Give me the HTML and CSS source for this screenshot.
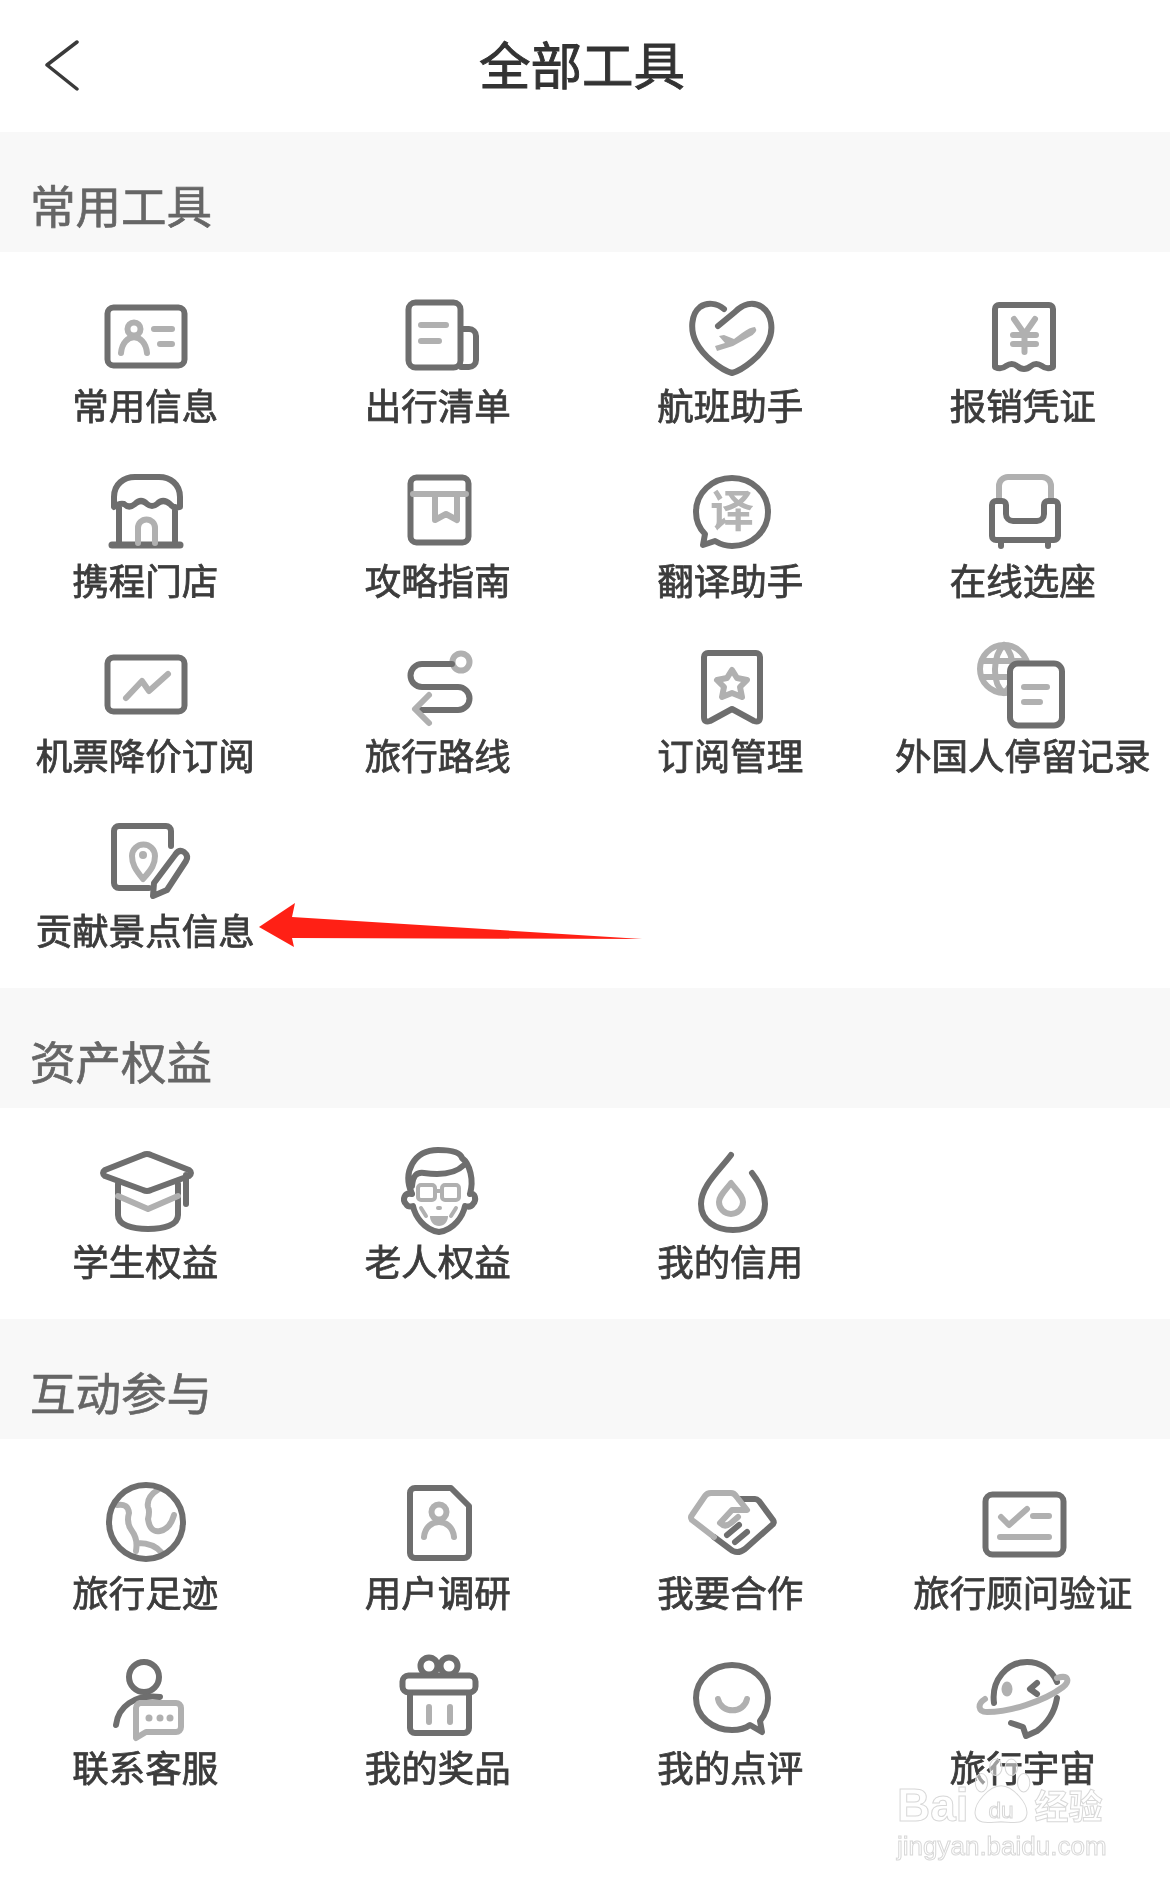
FILE: index.html
```html
<!DOCTYPE html>
<html lang="zh-CN">
<head>
<meta charset="utf-8">
<title>全部工具</title>
<link rel="stylesheet" href="styles.css">
</head>
<body>
<div class="page">
  <header class="top">
    <svg class="back" viewBox="0 0 36 54"><path d="M32 3 L2 26 L32 50"/></svg>
    <h1>全部工具</h1>
  </header>

  <h2 class="band">常用工具</h2>
  <section class="grid">
    <div class="item"><svg class="ic" viewBox="0 0 88 88"><rect class="d" x="5.500" y="17.500" width="77" height="58" rx="6"/><circle class="l" cx="32" cy="39" r="6.500"/><path class="l" d="M19 63C21 42 43 42 45 63M52 39H70M58 54H70"/></svg><span>常用信息</span></div>
    <div class="item"><svg class="ic" viewBox="0 0 88 88"><rect class="d" x="14.500" y="12.500" width="52" height="65" rx="7"/><path class="d" d="M67 39h8a7 7 0 0 1 7 7v24a7 7 0 0 1-7 7h-8"/><path class="l" d="M27 35H52M27 51H45"/></svg><span>出行清单</span></div>
    <div class="item"><svg class="ic" viewBox="0 0 88 88"><path class="d" d="M37 19C30 13 20 12 13 17C4 24 3 40 9 52C16 66 34 80 45 83C56 80 74 66 81 52C87 40 85 24 75 17C66 11 56 14 48 22L31 36"/><path class="lf" d="M68 37Q72 42 62 47L46 56L30 61L28 56L38 53L32 46L37 45L47 49L55 43Q63 37 68 37Z"/></svg><span>航班助手</span></div>
    <div class="item"><svg class="ic" viewBox="0 0 88 88"><path class="d" d="M16 77V19a4 4 0 0 1 4-4H70a4 4 0 0 1 4 4V77Q68 80 63 76Q57 72 52 76Q45 82 38 76Q33 72 27 76Q22 80 16 77Z"/><path class="l" d="M35 29L45.500 44L56 29M45.500 44V62M34 45H57M34 54H57"/></svg><span>报销凭证</span></div>

    <div class="item"><svg class="ic" viewBox="0 0 88 88"><path class="d" d="M12 42V32C12 19 22 12 33 12H57C68 12 78 19 78 32V42Q72 44 68 39Q61 33 55 39Q50 43 45 39Q39 33 33 39Q27 44 22 39Q17 38 12 42ZM17 42V79M73 42V79"/><path class="d thick" d="M10 80H78"/><path class="l" d="M36 78V63a8.500 8.500 0 0 1 17 0V78"/></svg><span>携程门店</span></div>
    <div class="item"><svg class="ic" viewBox="0 0 88 88"><rect class="d" x="16.500" y="12.500" width="58" height="65" rx="6"/><path class="l" d="M19 29H72M41 29V55L52 49L63 55V29"/></svg><span>攻略指南</span></div>
    <div class="item"><svg class="ic" viewBox="0 0 88 88"><path class="d" d="M45 13C25 13 9 28 9 47C9 56 12 63 18 69L16 80L28 76C33 79 39 81 45 81C65 81 81 66 81 47C81 28 65 13 45 13Z"/><text class="yi" x="45" y="62">译</text></svg><span>翻译助手</span></div>
    <div class="item"><svg class="ic" viewBox="0 0 88 88"><path class="l" d="M20 35V21a9 9 0 0 1 9-9H63a9 9 0 0 1 9 9V35"/><path class="d" d="M13 40a4 4 0 0 1 4-4h6a4 4 0 0 1 4 4v9a7 7 0 0 0 7 7h24a7 7 0 0 0 7-7v-9a4 4 0 0 1 4-4h6a4 4 0 0 1 4 4V71a4 4 0 0 1-4 4H17a4 4 0 0 1-4-4ZM22 76V81M69 76V81"/></svg><span>在线选座</span></div>

    <div class="item"><svg class="ic" viewBox="0 -3 88 88"><rect class="d" x="5.500" y="14.500" width="77" height="54" rx="6"/><path class="l" d="M24 55L40 38L47 48L66 31"/></svg><span>机票降价订阅</span></div>
    <div class="item"><svg class="ic" viewBox="0 -3 88 88"><circle class="l" cx="67" cy="19" r="8.500"/><path class="d" d="M58 21H28a11.500 11.500 0 0 0 0 23H64a11.500 11.500 0 0 1 0 23H24"/><path class="l" d="M35 52L21 66L35 80"/></svg><span>旅行路线</span></div>
    <div class="item"><svg class="ic" viewBox="0 -2 88 88"><path class="d" d="M17 15a4 4 0 0 1 4-4H69a4 4 0 0 1 4 4V75Q73 81 67 79L45 67L23 79Q17 81 17 75Z"/><path class="l" d="M45 28L50 36L60 38L53 45L55 55L45 51L35 55L37 45L30 38L40 36Z"/></svg><span>订阅管理</span></div>
    <div class="item"><svg class="ic" viewBox="0 -1 88 88"><circle class="l" cx="25" cy="28" r="24"/><path class="l" d="M25 4C14 14 12 42 25 52M25 4C36 14 38 42 25 52M3 20H47M3 36H47"/><rect class="d cover" x="31" y="22.500" width="52" height="62" rx="8"/><path class="l" d="M45 46H68M45 61H61"/></svg><span>外国人停留记录</span></div>

    <div class="item"><svg class="ic" viewBox="0 -3 88 88"><path class="d" d="M69 28V13a5 5 0 0 0-5-5H17a5 5 0 0 0-5 5V65a5 5 0 0 0 5 5H47"/><path class="l" d="M41 61C33 51 30 46 30 38a11 11 0 0 1 23 0C53 46 50 51 41 61Z"/><circle class="lf" cx="41" cy="37" r="4"/><path class="d" d="M73 37Q77 31 82 34Q87 38 84 43L65 72L51 78L52 65Z"/></svg><span>贡献景点信息</span></div>
  </section>

  <h2 class="band">资产权益</h2>
  <section class="grid">
    <div class="item"><svg class="ic" viewBox="0 0 88 88"><path class="d" d="M16 38V69C16 79 30 83 46 83C62 83 76 79 76 69V38"/><path class="l" d="M16 50L46 63L76 50"/><path class="d cover" d="M41 9Q45 7 49 9L87 24Q91 27 87 30L49 44Q45 46 41 44L3 30Q-1 27 3 24Z"/><path class="d" d="M84 29V58"/></svg><span>学生权益</span></div>
    <div class="item"><svg class="ic" viewBox="0 0 88 88"><path class="d" d="M18 48C8 26 20 4 44 4C54 4 66 5 68 12C76 18 80 34 76 48M18 40C19 30 22 26 30 27C44 29 60 29 70 19M18 48C10 46 8 54 12 58C14 61 16 61 19 60C21 70 30 84 45 86C60 84 69 70 71 60C74 61 77 61 79 58C83 54 81 46 76 48"/><rect class="l thin" x="24" y="39" width="17" height="15" rx="3"/><rect class="l thin" x="48" y="39" width="17" height="15" rx="3"/><path class="l thin" d="M41 45H48M27 62L32 70M62 62L57 70M44 62H46"/><path class="lf" d="M36 70H54C54 76 50 80 45 80C40 80 36 76 36 70Z"/></svg><span>老人权益</span></div>
    <div class="item"><svg class="ic" viewBox="0 0 88 88"><path class="d" d="M44 9C32 25 14 40 14 58C14 75 29 84 46 84C63 84 78 75 78 58C78 46 72 36 65 27"/><path class="l" d="M44 37C37 46 32 50 32 56a12 12 0 0 0 24 0C56 50 51 46 44 37Z"/></svg><span>我的信用</span></div>
  </section>

  <h2 class="band">互动参与</h2>
  <section class="grid last">
    <div class="item"><svg class="ic" viewBox="0 0 88 88"><path class="l" d="M15 28Q26 26 27 36Q24 46 30 54Q36 62 34 74M57 12Q44 20 46 30Q48 34 46 42Q48 56 58 54Q68 52 72 38M36 66Q52 66 60 76"/><circle class="d" cx="44" cy="45" r="37"/></svg><span>旅行足迹</span></div>
    <div class="item"><svg class="ic" viewBox="0 0 88 88"><path class="d" d="M16 16a5 5 0 0 1 5-5H57L75 29V76a5 5 0 0 1-5 5H21a5 5 0 0 1-5-5Z"/><circle class="l" cx="45" cy="35" r="7.500"/><path class="l" d="M30 60C32 40 58 40 60 60"/></svg><span>用户调研</span></div>
    <div class="item"><svg class="ic" viewBox="0 0 88 88"><path class="d" d="M52 22H68Q70 22 72 24L86 43Q88 46 85 48L58 72Q50 78 43 72L27 60M40 58L52 48M48 65L60 55"/><path class="l" d="M27 60L5 43Q3 40 5 38L18 19Q20 16 24 16H44Q47 16 49 19L60 33H45L33 46Q38 51 44 46L51 40"/></svg><span>我要合作</span></div>
    <div class="item"><svg class="ic" viewBox="0 0 88 88"><rect class="d" x="6.500" y="17.500" width="78" height="60" rx="7"/><path class="l" d="M22 40L30 48L48 32M54 39H70M21 60H70"/></svg><span>旅行顾问验证</span></div>

    <div class="item"><svg class="ic" viewBox="0 0 88 88"><circle class="d" cx="42" cy="25" r="15"/><path class="d" d="M14 73C16 55 32 42 58 45"/><path class="lb" d="M38 51H74a5 5 0 0 1 5 5V75a5 5 0 0 1-5 5H44L34 86V56a5 5 0 0 1 4-5Z"/><circle class="lf" cx="47" cy="66" r="3.500"/><circle class="lf" cx="58" cy="66" r="3.500"/><circle class="lf" cx="68" cy="66" r="3.500"/></svg><span>联系客服</span></div>
    <div class="item"><svg class="ic" viewBox="0 0 88 88"><circle class="d" cx="35" cy="14" r="8.500"/><circle class="d" cx="55" cy="14" r="8.500"/><rect class="d cover" x="8.500" y="23.500" width="73" height="17" rx="6"/><path class="d" d="M16 41V76a5 5 0 0 0 5 5H70a5 5 0 0 0 5-5V41"/><path class="l" d="M35 55V70M56 55V70"/></svg><span>我的奖品</span></div>
    <div class="item"><svg class="ic" viewBox="0 0 88 88"><path class="d" d="M45 13C26 13 9 27 9 46C9 65 26 78 45 78C52 78 59 76 63 73L75 80L73 69C78 63 81 55 81 46C81 27 64 13 45 13Z"/><path class="l" d="M31 47C34 62 57 62 60 47"/></svg><span>我的点评</span></div>
    <div class="item"><svg class="ic" viewBox="0 0 88 88"><path class="d" d="M15 51C12 28 28 10 48 10C60 10 72 16 78 30M78 46C76 58 70 70 58 79L47 84L44 75L32 71"/><path class="l" d="M78 26C90 22 91 30 84 35C64 50 30 60 8 60C-1 60 -2 52 6 47"/><ellipse class="lf" cx="28" cy="37" rx="5.500" ry="7.500"/><path class="d" d="M58 31L51 37L58 42"/></svg><span>旅行宇宙</span></div>
  </section>

  <svg class="arrow" viewBox="0 0 400 50"><polygon points="1,24 37,0 34,14 384,36 34,35 36,44"/></svg>

  <div class="mark">
    <div class="mark-logo">
      <span class="bai">Bai</span>
      <svg class="paw" viewBox="0 0 58 66"><ellipse cx="10" cy="24" rx="6" ry="9"/><ellipse cx="24" cy="9" rx="6" ry="8"/><ellipse cx="39" cy="9" rx="6" ry="8"/><ellipse cx="51" cy="24" rx="6" ry="9"/><path d="M29 27C40 27 56 44 54 55C52 66 38 62 29 62C20 62 6 66 4 55C2 44 18 27 29 27Z"/><text x="29" y="58">du</text></svg>
      <span class="cn">经验</span>
    </div>
    <div class="mark-url">jingyan.baidu.com</div>
  </div>
</div>
</body>
</html>
```

FILE: styles.css
```css
* { box-sizing: border-box; }
html, body { margin: 0; padding: 0; background: #fff; }
body { font-family: "Noto Sans CJK SC", "Noto Sans", sans-serif; }
.page { position: relative; width: 1170px; height: 1882px; overflow: hidden; background: #fff; filter: blur(0.45px); }

.top { position: relative; height: 132px; display: flex; align-items: center; justify-content: center; }
.top h1 { margin: 0 6px 6px 0; font-size: 51.5px; line-height: 60px; font-weight: 400; color: #333; -webkit-text-stroke: 0.9px #333; }
.back { position: absolute; left: 45px; top: 39px; width: 36px; height: 54px; fill: none; stroke: #3a3a3a; stroke-width: 3.5; stroke-linecap: round; stroke-linejoin: round; }

.band { margin: 0; height: 120px; padding: 0 0 18px 30px; display: flex; align-items: flex-end; background: #f8f8f8; font-size: 45.5px; line-height: 60px; font-weight: 400; color: #666; -webkit-text-stroke: 0.7px #666; }

.grid { display: grid; grid-template-columns: repeat(4, 1fr); row-gap: 37px; padding: 38px 0 35px; }
.item { display: flex; flex-direction: column; align-items: center; height: 138px; }
.item span { margin: 2px 2px 0 0; font-size: 36.500px; line-height: 50px; font-weight: 400; color: #3c3c3c; -webkit-text-stroke: 0.8px #3c3c3c; white-space: nowrap; }
.ic { display: block; flex: none; margin-right: 1px; width: 88px; height: 88px; overflow: visible; }

.d, .l, .lb { fill: none; stroke-linecap: round; stroke-linejoin: round; stroke-width: 6; }
.d { stroke: #6e6e6e; }
.l { stroke: #b0b0b0; }
.lb { stroke: #b0b0b0; fill: #fff; }
.lf { fill: #b0b0b0; }
.thick { stroke-width: 7; }
.thin { stroke-width: 4; }
.cover { fill: #fff; }
.yi { font-size: 44px; font-weight: 700; fill: #b4b4b4; text-anchor: middle; }

.arrow { position: absolute; left: 255px; top: 903px; width: 406px; height: 50px; fill: #ff2015; }

.mark { position: absolute; left: 897px; top: 1783px; width: 214px; display: flex; flex-direction: column; gap: 5px; font-family: "Liberation Sans", sans-serif; color: rgba(255, 255, 255, 0.7); -webkit-text-stroke: 1px #d8d8d8; }
.mark-logo { position: relative; display: flex; align-items: center; height: 44px; font-size: 46px; line-height: 44px; font-weight: 700; }
.mark-logo .cn { font-family: "Noto Sans CJK SC", sans-serif; font-size: 34px; margin-left: 4px; }
.paw { flex: none; width: 60px; height: 68px; margin: -26px 0 0 2px; fill: rgba(255, 255, 255, 0.5); stroke: #d8d8d8; stroke-width: 1; }
.paw text { font-size: 22px; font-weight: 400; text-anchor: middle; }
.mark-url { font-size: 26px; line-height: 28px; white-space: nowrap; }
```
